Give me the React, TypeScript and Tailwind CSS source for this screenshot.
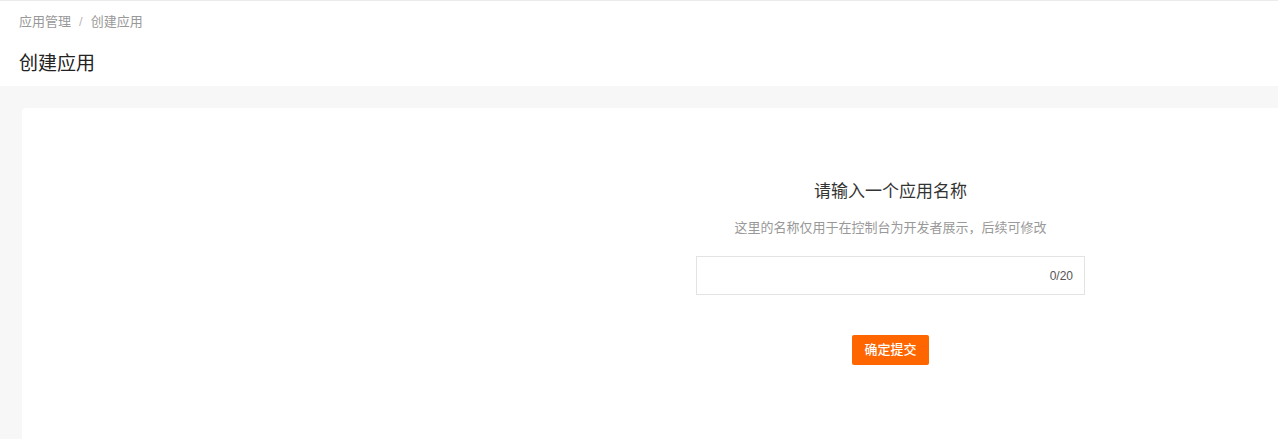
import React from "react";

const font = { fontFamily: '"Liberation Sans", "Noto Sans CJK SC", sans-serif' };

const App = () => {
  return (
    <div className="min-h-[439px] border-t border-[#ebebeb] bg-[#f7f7f7] text-[#333]" style={font}>
      {/* Header */}
      <div className="bg-white px-[19px] pt-[12px] h-[85px]">
        <div className="flex items-center text-[13px] leading-[18px] text-[#999]">
          <span>应用管理</span>
          <span className="mx-[8px] text-[#bbb]">/</span>
          <span className="text-[#999]">创建应用</span>
        </div>
        <h1 className="mt-[20px] text-[19px] leading-[26px] text-[#222]">创建应用</h1>
      </div>

      {/* Body */}
      <div className="pl-[22px] pt-[22px]">
        <div className="min-h-[331px] rounded-tl-[4px] bg-white pl-[674px] pt-[72px]">
          <div className="flex w-[389px] flex-col items-center">
            <h2 className="text-[17px] leading-[24px] text-[#333]">请输入一个应用名称</h2>
            <p className="mt-[14px] text-[13px] leading-[20px] text-[#999]">
              这里的名称仅用于在控制台为开发者展示，后续可修改
            </p>
            <div className="mt-[18px] flex h-[39px] w-full items-center justify-end border border-[#e3e3e3] px-[11px]">
              <input className="flex-1 bg-transparent text-[13px] outline-none" />
              <span className="text-[12px] text-[#555]">0/20</span>
            </div>
            <button className="mt-[40px] h-[30px] w-[77px] rounded-[2px] bg-[#ff6600] text-[13px] font-medium text-white">
              确定提交
            </button>
          </div>
        </div>
      </div>
    </div>
  );
};

export default App;
